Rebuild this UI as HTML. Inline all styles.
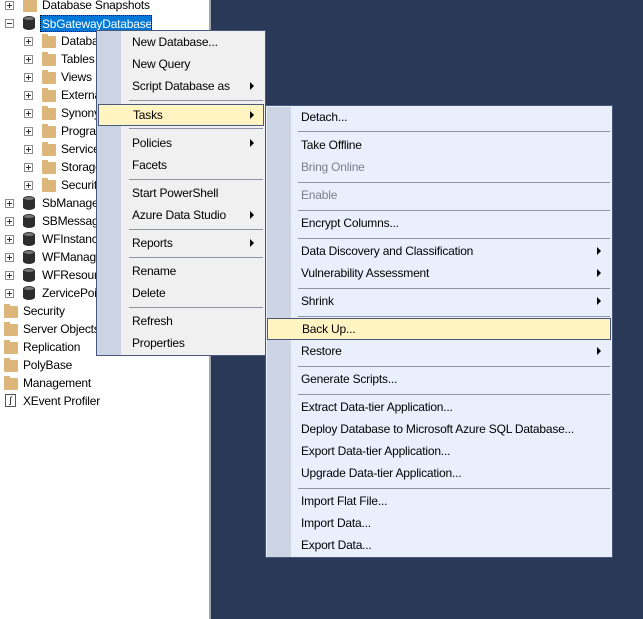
<!DOCTYPE html>
<html><head><style>
*{margin:0;padding:0;box-sizing:border-box}
body{width:643px;height:619px;overflow:hidden;background:#293957;font-family:"Liberation Sans",sans-serif;font-size:12px;letter-spacing:-0.2px;color:#000;position:relative}
#tree{position:absolute;left:0;top:0;width:211px;height:619px;background:#fff;border-right:2px solid #a0a4ac;overflow:hidden}
.r{position:absolute;height:18px;line-height:18px;white-space:nowrap}
.pl{position:absolute;width:9px;height:9px;border:1px solid #8c8c8c;background:#fff}
.pl:before{content:"";position:absolute;left:1px;top:3px;width:5px;height:1px;background:#333}
.pl.p:after{content:"";position:absolute;left:3px;top:1px;width:1px;height:5px;background:#333}
.fd{position:absolute;width:14px;height:12px;background:#dcb67a;border-radius:1px}
.fd:before{content:"";position:absolute;left:0;top:-2px;width:6px;height:3px;background:#dcb67a}
.db{position:absolute;width:12px;height:14px;background:#2d2d2d;border-radius:6px/3px}
.db:before{content:"";position:absolute;left:1px;top:1px;width:10px;height:3px;border-radius:5px/1.5px;background:#777}
.menu{position:absolute;border:1px solid #48577a}
.it{position:absolute;left:0;right:0;height:22px;line-height:22px}
.it span{position:absolute;white-space:nowrap}
.ar{position:absolute;width:0;height:0;border-left:4px solid #000;border-top:4px solid transparent;border-bottom:4px solid transparent;top:7px}
.sep{position:absolute;height:1px;background:#8e96a6}
.hl{background:#fff4c2;border:1px solid #4a5a7a}
.dis{color:#7a7f88}
</style></head><body>
<div id="tree">
<div class="pl p" style="left:5px;top:1px"></div><div class="fd" style="left:23px;top:0px"></div><div class="r" style="left:42px;top:-4px">Database Snapshots</div>
<div class="pl" style="left:5px;top:19px"></div><div class="db" style="left:23px;top:16px"></div>
<div class="r" style="left:40px;top:15px;height:17px;line-height:16px;background:#0078d7;color:#fff;padding:0 1px;border:1px dotted #000;width:112px;overflow:hidden">SbGatewayDatabase</div>
<div class="pl p" style="left:24px;top:37px"></div><div class="fd" style="left:42px;top:36px"></div><div class="r" style="left:61px;top:32px">Databa</div>
<div class="pl p" style="left:24px;top:55px"></div><div class="fd" style="left:42px;top:54px"></div><div class="r" style="left:61px;top:50px">Tables</div>
<div class="pl p" style="left:24px;top:73px"></div><div class="fd" style="left:42px;top:72px"></div><div class="r" style="left:61px;top:68px">Views</div>
<div class="pl p" style="left:24px;top:91px"></div><div class="fd" style="left:42px;top:90px"></div><div class="r" style="left:61px;top:86px">External</div>
<div class="pl p" style="left:24px;top:109px"></div><div class="fd" style="left:42px;top:108px"></div><div class="r" style="left:61px;top:104px">Synonyms</div>
<div class="pl p" style="left:24px;top:127px"></div><div class="fd" style="left:42px;top:126px"></div><div class="r" style="left:61px;top:122px">Programm</div>
<div class="pl p" style="left:24px;top:145px"></div><div class="fd" style="left:42px;top:144px"></div><div class="r" style="left:61px;top:140px">Service</div>
<div class="pl p" style="left:24px;top:163px"></div><div class="fd" style="left:42px;top:162px"></div><div class="r" style="left:61px;top:158px">Storage</div>
<div class="pl p" style="left:24px;top:181px"></div><div class="fd" style="left:42px;top:180px"></div><div class="r" style="left:61px;top:176px">Security</div>
<div class="pl p" style="left:5px;top:199px"></div><div class="db" style="left:23px;top:196px"></div><div class="r" style="left:42px;top:194px">SbManagement</div>
<div class="pl p" style="left:5px;top:217px"></div><div class="db" style="left:23px;top:214px"></div><div class="r" style="left:42px;top:212px">SBMessage</div>
<div class="pl p" style="left:5px;top:235px"></div><div class="db" style="left:23px;top:232px"></div><div class="r" style="left:42px;top:230px">WFInstance</div>
<div class="pl p" style="left:5px;top:253px"></div><div class="db" style="left:23px;top:250px"></div><div class="r" style="left:42px;top:248px">WFManage</div>
<div class="pl p" style="left:5px;top:271px"></div><div class="db" style="left:23px;top:268px"></div><div class="r" style="left:42px;top:266px">WFResource</div>
<div class="pl p" style="left:5px;top:289px"></div><div class="db" style="left:23px;top:286px"></div><div class="r" style="left:42px;top:284px">ZervicePoint</div>
<div class="fd" style="left:4px;top:306px"></div><div class="r" style="left:23px;top:302px">Security</div>
<div class="fd" style="left:4px;top:324px"></div><div class="r" style="left:23px;top:320px">Server Objects</div>
<div class="fd" style="left:4px;top:342px"></div><div class="r" style="left:23px;top:338px">Replication</div>
<div class="fd" style="left:4px;top:360px"></div><div class="r" style="left:23px;top:356px">PolyBase</div>
<div class="fd" style="left:4px;top:378px"></div><div class="r" style="left:23px;top:374px">Management</div>
<div style="position:absolute;left:5px;top:394px;width:11px;height:13px;border:1px solid #555;font-size:9px;line-height:11px;text-align:center">ʃ</div><div class="r" style="left:23px;top:392px">XEvent Profiler</div>
</div>

<div class="menu" style="left:96px;top:30px;width:170px;height:326px;background:#f0f0f0">
<div style="position:absolute;left:0;top:0;width:24px;height:100%;background:#cdd5e5"></div>
<div class="it" style="top:0"><span style="left:35px">New Database...</span></div>
<div class="it" style="top:22px"><span style="left:35px">New Query</span></div>
<div class="it" style="top:44px"><span style="left:35px">Script Database as</span><div class="ar" style="left:153px"></div></div>
<div class="sep" style="left:32px;right:2px;top:69px"></div>
<div class="it hl" style="top:73px;left:1px;right:1px"><span style="left:34px;top:-1px">Tasks</span><div class="ar" style="left:151px;top:6px"></div></div>
<div class="sep" style="left:32px;right:2px;top:97px"></div>
<div class="it" style="top:101px"><span style="left:35px">Policies</span><div class="ar" style="left:153px"></div></div>
<div class="it" style="top:123px"><span style="left:35px">Facets</span></div>
<div class="sep" style="left:32px;right:2px;top:148px"></div>
<div class="it" style="top:151px"><span style="left:35px">Start PowerShell</span></div>
<div class="it" style="top:173px"><span style="left:35px">Azure Data Studio</span><div class="ar" style="left:153px"></div></div>
<div class="sep" style="left:32px;right:2px;top:198px"></div>
<div class="it" style="top:201px"><span style="left:35px">Reports</span><div class="ar" style="left:153px"></div></div>
<div class="sep" style="left:32px;right:2px;top:226px"></div>
<div class="it" style="top:229px"><span style="left:35px">Rename</span></div>
<div class="it" style="top:251px"><span style="left:35px">Delete</span></div>
<div class="sep" style="left:32px;right:2px;top:276px"></div>
<div class="it" style="top:279px"><span style="left:35px">Refresh</span></div>
<div class="it" style="top:301px"><span style="left:35px">Properties</span></div>
</div>

<div class="menu" style="left:265px;top:105px;width:348px;height:453px;background:#e9effd">
<div style="position:absolute;left:1px;top:1px;width:24px;height:450px;background:#cdd5e5"></div>
<div class="it" style="top:0px"><span style="left:35px">Detach...</span></div>
<div class="sep" style="left:32px;right:2px;top:25px"></div>
<div class="it" style="top:28px"><span style="left:35px">Take Offline</span></div>
<div class="it dis" style="top:50px"><span style="left:35px">Bring Online</span></div>
<div class="sep" style="left:32px;right:2px;top:76px"></div>
<div class="it dis" style="top:78px"><span style="left:35px">Enable</span></div>
<div class="sep" style="left:32px;right:2px;top:104px"></div>
<div class="it" style="top:106px"><span style="left:35px">Encrypt Columns...</span></div>
<div class="sep" style="left:32px;right:2px;top:132px"></div>
<div class="it" style="top:134px"><span style="left:35px">Data Discovery and Classification</span><div class="ar" style="left:331px"></div></div>
<div class="it" style="top:156px"><span style="left:35px">Vulnerability Assessment</span><div class="ar" style="left:331px"></div></div>
<div class="sep" style="left:32px;right:2px;top:182px"></div>
<div class="it" style="top:184px"><span style="left:35px">Shrink</span><div class="ar" style="left:331px"></div></div>
<div class="sep" style="left:32px;right:2px;top:210px"></div>
<div class="it hl" style="top:212px;left:1px;right:1px"><span style="left:34px;top:-1px">Back Up...</span></div>
<div class="it" style="top:234px"><span style="left:35px">Restore</span><div class="ar" style="left:331px"></div></div>
<div class="sep" style="left:32px;right:2px;top:260px"></div>
<div class="it" style="top:262px"><span style="left:35px">Generate Scripts...</span></div>
<div class="sep" style="left:32px;right:2px;top:288px"></div>
<div class="it" style="top:290px"><span style="left:35px">Extract Data-tier Application...</span></div>
<div class="it" style="top:312px"><span style="left:35px">Deploy Database to Microsoft Azure SQL Database...</span></div>
<div class="it" style="top:334px"><span style="left:35px">Export Data-tier Application...</span></div>
<div class="it" style="top:356px"><span style="left:35px">Upgrade Data-tier Application...</span></div>
<div class="sep" style="left:32px;right:2px;top:382px"></div>
<div class="it" style="top:384px"><span style="left:35px">Import Flat File...</span></div>
<div class="it" style="top:406px"><span style="left:35px">Import Data...</span></div>
<div class="it" style="top:428px"><span style="left:35px">Export Data...</span></div>
</div>
</body></html>
